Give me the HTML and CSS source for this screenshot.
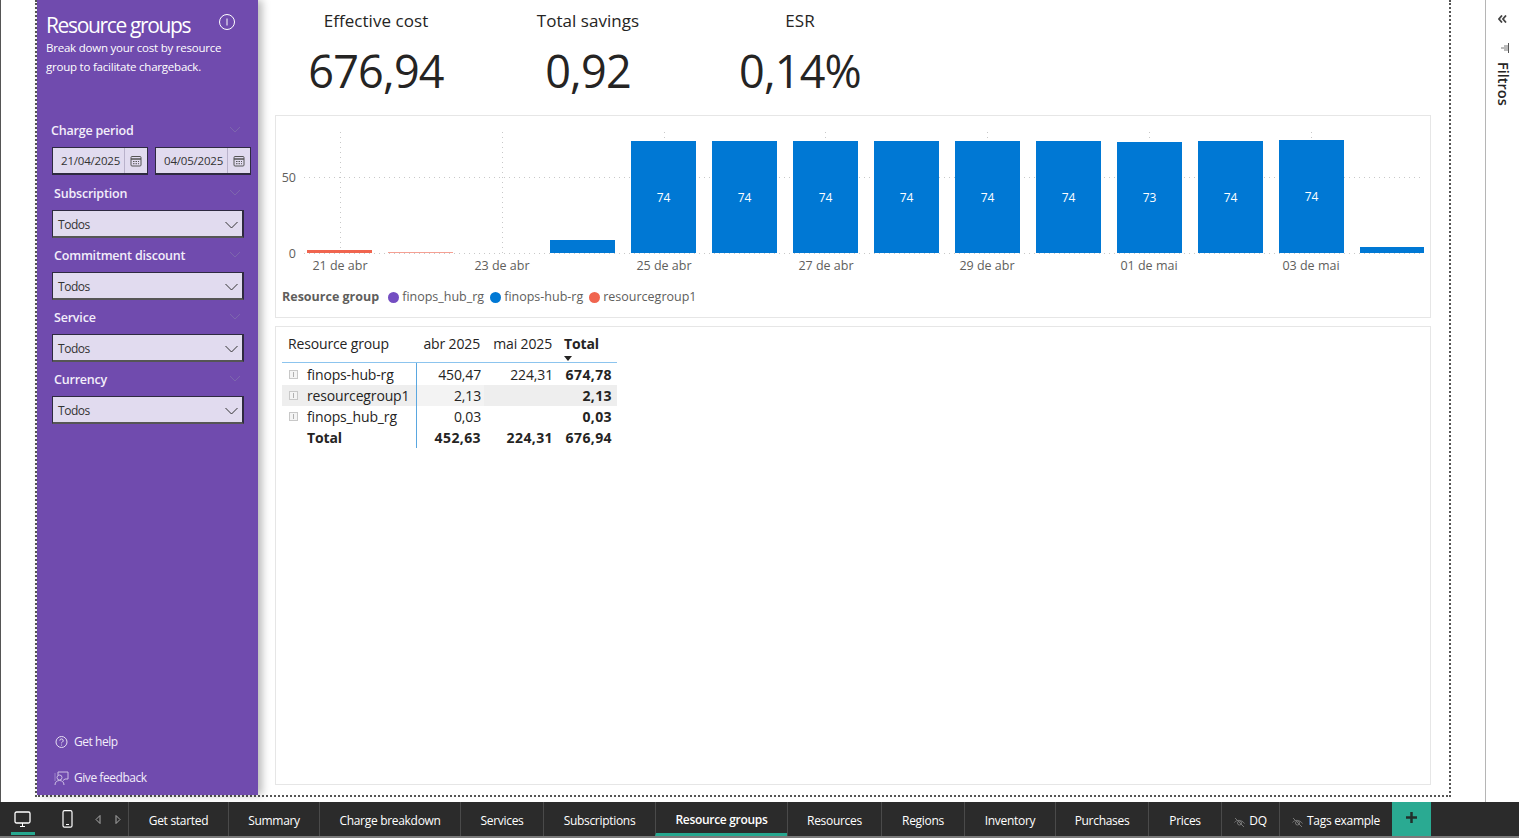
FILE: index.html
```html
<!DOCTYPE html>
<html lang="en">
<head>
  <meta charset="UTF-8" />
  <title>Resource groups</title>
  <link rel="stylesheet" href="styles.css">
</head>
<body>
  <div class="app">
    <div class="workspace">
      <div class="canvas">
        <aside class="sidebar">
          <div class="side-head">
            <h1>Resource groups</h1>
            <svg class="info" width="18" height="18" viewBox="0 0 18 18"><circle cx="9" cy="8" r="7.5" fill="none" stroke="#fff"/><path d="M9 4.5v7" stroke="#fff"/></svg>
          </div>
          <p class="side-desc">Break down your cost by resource group to facilitate chargeback.</p>

          <div class="slicer first">
            <div class="slicer-title date-title">Charge period<svg class="ghost" width="12" height="7" viewBox="0 0 12 7"><path d="M1 1l5 5 5-5"/></svg></div>
            <div class="dates">
              <div class="date"><span>21/04/2025</span><i class="cal"><svg width="12" height="12" viewBox="0 0 12 12"><rect x="1" y="1.5" width="10" height="9.5" rx="1" fill="none" stroke="#555"/><path d="M1 4h10" stroke="#555" stroke-width="1.5"/><path d="M3 6.5h6M3 8.7h6" stroke="#555" stroke-dasharray="1.5 1"/></svg></i></div>
              <div class="date"><span>04/05/2025</span><i class="cal"><svg width="12" height="12" viewBox="0 0 12 12"><rect x="1" y="1.5" width="10" height="9.5" rx="1" fill="none" stroke="#555"/><path d="M1 4h10" stroke="#555" stroke-width="1.5"/><path d="M3 6.5h6M3 8.7h6" stroke="#555" stroke-dasharray="1.5 1"/></svg></i></div>
            </div>
          </div>

          <div class="slicer">
            <div class="slicer-title">Subscription<svg class="ghost" width="12" height="7" viewBox="0 0 12 7"><path d="M1 1l5 5 5-5"/></svg></div>
            <div class="select"><span>Todos</span><svg width="13" height="8" viewBox="0 0 13 8"><path d="M.5 1l6 6 6-6" fill="none" stroke="#333"/></svg></div>
          </div>
          <div class="slicer">
            <div class="slicer-title">Commitment discount<svg class="ghost" width="12" height="7" viewBox="0 0 12 7"><path d="M1 1l5 5 5-5"/></svg></div>
            <div class="select"><span>Todos</span><svg width="13" height="8" viewBox="0 0 13 8"><path d="M.5 1l6 6 6-6" fill="none" stroke="#333"/></svg></div>
          </div>
          <div class="slicer">
            <div class="slicer-title">Service<svg class="ghost" width="12" height="7" viewBox="0 0 12 7"><path d="M1 1l5 5 5-5"/></svg></div>
            <div class="select"><span>Todos</span><svg width="13" height="8" viewBox="0 0 13 8"><path d="M.5 1l6 6 6-6" fill="none" stroke="#333"/></svg></div>
          </div>
          <div class="slicer">
            <div class="slicer-title">Currency<svg class="ghost" width="12" height="7" viewBox="0 0 12 7"><path d="M1 1l5 5 5-5"/></svg></div>
            <div class="select"><span>Todos</span><svg width="13" height="8" viewBox="0 0 13 8"><path d="M.5 1l6 6 6-6" fill="none" stroke="#333"/></svg></div>
          </div>

          <div class="side-links">
            <a class="side-link"><svg width="15" height="14" viewBox="-.5 0 15 14"><circle cx="7" cy="7" r="5.5" fill="none" stroke="#e6dff2"/><path d="M5.3 5.6a1.7 1.7 0 1 1 2.5 1.5c-.6.3-.8.6-.8 1.2" fill="none" stroke="#e6dff2"/><circle cx="7" cy="10" r=".6" fill="#e6dff2"/></svg>Get help</a>
            <a class="side-link"><svg width="15" height="15" viewBox="0 0 15 15"><path d="M4 4V1h10v7h-3l-2 1.5" fill="none" stroke="#cdbfe4"/><circle cx="5.5" cy="6.5" r="2.5" fill="none" stroke="#cdbfe4"/><path d="M1 14c0-3 2-4.5 4.5-4.5S10 11 10 14" fill="none" stroke="#cdbfe4"/><path d="M1 2v8" stroke="#9c83c9"/></svg>Give feedback</a>
          </div>
        </aside>

        <main class="report">
          <section class="kpis">
            <div class="kpi"><div class="kpi-label">Effective cost</div><div class="kpi-value">676,94</div></div>
            <div class="kpi"><div class="kpi-label">Total savings</div><div class="kpi-value">0,92</div></div>
            <div class="kpi"><div class="kpi-label">ESR</div><div class="kpi-value">0,14%</div></div>
          </section>

          <section class="card chart-card">
            <svg class="chart" width="1154" height="167" viewBox="276 116 1154 167">
              <g class="grid">
                <path d="M304 177.5H1424M304 253.5H1424"/>
                <path d="M340.5 132V253M502.5 132V253M664.5 132V253M825.5 132V253M987.5 132V253M1149.5 132V253M1311.5 132V253"/>
              </g>
              <text class="axis" x="296" y="182" text-anchor="end">50</text>
              <text class="axis" x="296" y="258" text-anchor="end">0</text>

              <rect x="307" y="250" width="65" height="3" fill="#f0654f"/>
              <rect x="388" y="252" width="65" height="1" fill="#f5a093"/>
              <g class="bars">
                <rect x="550" y="240" width="65" height="13"/>
                <rect x="631" y="141" width="65" height="112"/>
                <rect x="712" y="141" width="65" height="112"/>
                <rect x="793" y="141" width="65" height="112"/>
                <rect x="874" y="141" width="65" height="112"/>
                <rect x="955" y="141" width="65" height="112"/>
                <rect x="1036" y="141" width="65" height="112"/>
                <rect x="1117" y="142" width="65" height="111"/>
                <rect x="1198" y="141" width="65" height="112"/>
                <rect x="1279" y="140" width="65" height="113"/>
                <rect x="1360" y="247" width="64" height="6"/>
              </g>
              <g class="labels" text-anchor="middle">
                <text x="663.5" y="202">74</text>
                <text x="744.5" y="202">74</text>
                <text x="825.5" y="202">74</text>
                <text x="906.5" y="202">74</text>
                <text x="987.5" y="202">74</text>
                <text x="1068.5" y="202">74</text>
                <text x="1149.5" y="202">73</text>
                <text x="1230.5" y="202">74</text>
                <text x="1311.5" y="201">74</text>
              </g>
              <g class="axis" text-anchor="middle">
                <text x="340" y="270">21 de abr</text>
                <text x="502" y="270">23 de abr</text>
                <text x="664" y="270">25 de abr</text>
                <text x="826" y="270">27 de abr</text>
                <text x="987" y="270">29 de abr</text>
                <text x="1149" y="270">01 de mai</text>
                <text x="1311" y="270">03 de mai</text>
              </g>
            </svg>
            <div class="legend">
              <b>Resource group</b>
              <span class="key"><i class="dot purple"></i>finops_hub_rg</span>
              <span class="key"><i class="dot blue"></i>finops-hub-rg</span>
              <span class="key"><i class="dot coral"></i>resourcegroup1</span>
            </div>
          </section>

          <section class="card table-card">
            <table class="matrix">
              <thead>
                <tr>
                  <th class="name">Resource group</th>
                  <th class="num col-abr">abr 2025</th>
                  <th class="num col-mai">mai 2025</th>
                  <th class="tot">Total<i class="sort"></i></th>
                </tr>
              </thead>
              <tbody>
                <tr><td class="name"><i class="plus"></i>finops-hub-rg</td><td class="num">450,47</td><td class="num">224,31</td><td class="num strong">674,78</td></tr>
                <tr class="hover"><td class="name"><i class="plus"></i>resourcegroup1</td><td class="num">2,13</td><td class="num"></td><td class="num strong">2,13</td></tr>
                <tr><td class="name"><i class="plus"></i>finops_hub_rg</td><td class="num">0,03</td><td class="num"></td><td class="num strong">0,03</td></tr>
                <tr class="total"><td class="name"><i class="plus blank"></i>Total</td><td class="num strong">452,63</td><td class="num strong">224,31</td><td class="num strong">676,94</td></tr>
              </tbody>
            </table>
          </section>
        </main>
      </div>

      <aside class="filters">
        <svg class="collapse" width="9" height="8" viewBox="0 0 9 8"><path d="M4 .5L1 4l3 3.5M8 .5L5 4l3 3.5" fill="none" stroke="#444" stroke-width="1.8"/></svg>
        <svg class="funnel" width="9" height="10" viewBox="0 0 9 10"><path d="M0 5h7M3 3h4M3 7h4" stroke="#777"/><path d="M7.5 0v10" stroke="#555"/></svg>
        <span class="filters-label">Filtros</span>
      </aside>
    </div>

    <nav class="tabs">
      <div class="devices">
        <span class="device on"><svg width="17" height="17" viewBox="0 0 17 17"><rect x="1" y="1" width="15" height="11" rx="1.5" fill="none" stroke="#fff" stroke-width="1.3"/><path d="M6 15.5h5M8.5 12v3" stroke="#fff"/></svg></span>
        <span class="device"><svg width="11" height="18" viewBox="0 0 11 18"><rect x="1" y=".7" width="9" height="16.5" rx="1.5" fill="none" stroke="#fff" stroke-width="1.2"/><path d="M4 14.5h3" stroke="#fff"/></svg></span>
        <span class="pager"><svg width="6" height="9" viewBox="0 0 6 9"><path d="M5 .5L1 4.5 5 8.5z" fill="none" stroke="#aaa"/></svg><svg width="6" height="9" viewBox="0 0 6 9"><path d="M1 .5L5 4.5 1 8.5z" fill="none" stroke="#aaa"/></svg></span>
      </div>
      <a class="tab">Get started</a>
      <a class="tab">Summary</a>
      <a class="tab">Charge breakdown</a>
      <a class="tab">Services</a>
      <a class="tab">Subscriptions</a>
      <a class="tab active">Resource groups</a>
      <a class="tab">Resources</a>
      <a class="tab">Regions</a>
      <a class="tab">Inventory</a>
      <a class="tab">Purchases</a>
      <a class="tab">Prices</a>
      <a class="tab hidden-tab"><svg width="11" height="11" viewBox="0 0 11 11"><path d="M.5 5.5c2-3 7-3 10 1M1 1l9 9" fill="none" stroke="#777"/><circle cx="5.5" cy="6" r="2" fill="none" stroke="#777"/></svg>DQ</a>
      <a class="tab hidden-tab"><svg width="11" height="11" viewBox="0 0 11 11"><path d="M.5 5.5c2-3 7-3 10 1M1 1l9 9" fill="none" stroke="#777"/><circle cx="5.5" cy="6" r="2" fill="none" stroke="#777"/></svg>Tags example</a>
      <a class="tab-add"><svg width="11" height="11" viewBox="0 0 11 11"><path d="M5.5 0v11M0 5.5h11" stroke="#22302c" stroke-width="2.5"/></svg></a>
    </nav>
  </div>
</body>
</html>
```

FILE: styles.css
```css
html, body {
  margin: 0;
  padding: 0;
  height: 100%;
  background: #fff;
  overflow: hidden;
}
body {
  font-family: "Open Sans", "Noto Sans", "Liberation Sans", sans-serif;
  color: #252423;
}
.app {
  height: 838px;
  display: flex;
  flex-direction: column;
}
.workspace {
  height: 802px;
  display: flex;
  border-left: 1px solid #555;
  box-sizing: border-box;
  padding-left: 34px;
}

/* report canvas */
.canvas {
  width: 1416px;
  height: 797px;
  box-sizing: border-box;
  border: 2px dotted #555;
  border-top: none;
  display: flex;
}
.sidebar {
  width: 221px;
  flex: none;
  background: #704bae;
  color: #fff;
  box-shadow: 4px 0 8px rgba(0, 0, 0, 0.28);
  box-sizing: border-box;
  padding: 13px 14px 8px 9px;
  display: flex;
  flex-direction: column;
}
.side-head {
  display: flex;
  justify-content: space-between;
  align-items: flex-start;
  padding-right: 8px;
}
.side-head h1 {
  margin: 0;
  font-size: 21px;
  line-height: 24px;
  font-weight: 400;
  letter-spacing: -1.35px;
}
.info {
  margin-top: 1px;
}
.side-desc {
  margin: 1px 0 0;
  font-size: 11.5px;
  line-height: 19px;
  letter-spacing: -0.22px;
  width: 190px;
}
.slicer {
  margin: 0 0 0 6px;
  height: 62px;
}
.slicer.first {
  margin-top: 46px;
  height: 63px;
}
.slicer-title {
  font-size: 12.5px;
  font-weight: 600;
  line-height: 18px;
  letter-spacing: -0.2px;
  color: #f3eefa;
  padding-left: 2px;
  height: 25px;
  position: relative;
}
.date-title {
  padding-left: 0;
  margin-left: -1px;
}
.ghost {
  position: absolute;
  right: 3px;
  top: 4px;
  fill: none;
  stroke: #7d66ad;
}
.dates {
  display: flex;
  gap: 7px;
  width: 199px;
}
.date {
  flex: none;
  width: 96px;
  height: 28px;
  box-sizing: border-box;
  background: #e1dbef;
  border: 1px solid #2e2a40;
  border-bottom-width: 2px;
  display: flex;
  align-items: center;
  justify-content: space-between;
  font-size: 11.5px;
  letter-spacing: -0.2px;
  color: #333;
  padding-left: 8px;
}
.cal {
  width: 22px;
  height: 100%;
  border-left: 1px solid #b9b2cb;
  display: flex;
  align-items: center;
  justify-content: center;
}
.select {
  width: 192px;
  height: 28px;
  box-sizing: border-box;
  background: #e1dbef;
  border: 1px solid #2e2a40;
  border-bottom: 2px solid #555;
  border-right-width: 2px;
  display: flex;
  align-items: center;
  justify-content: space-between;
  padding: 2px 4px 0 5px;
  font-size: 12px;
  letter-spacing: -0.45px;
  color: #333;
}
.side-links {
  margin-top: auto;
  display: flex;
  flex-direction: column;
  gap: 18px;
  padding-left: 8px;
}
.side-link {
  display: flex;
  align-items: center;
  gap: 5px;
  font-size: 12px;
  line-height: 18px;
  letter-spacing: -0.45px;
  color: #f3eefa;
}

/* main report area */
.report {
  flex: 1;
  padding: 0 20px 0 17px;
  display: flex;
  flex-direction: column;
}
.kpis {
  height: 115px;
  display: flex;
  margin-left: -5px;
}
.kpi {
  width: 212px;
  text-align: center;
}
.kpi-label {
  font-size: 17px;
  line-height: 22px;
  margin-top: 10px;
  letter-spacing: 0.05px;
}
.kpi-value {
  font-size: 45px;
  line-height: 60px;
  margin-top: 9px;
  letter-spacing: -0.8px;
}
.card {
  border: 1px solid #e6e6e6;
  box-sizing: border-box;
}
.chart-card {
  height: 203px;
}
.chart {
  display: block;
}
.grid path {
  fill: none;
  stroke: #c8c8c8;
  stroke-dasharray: 1 4;
}
.bars rect {
  fill: #0078d4;
}
.axis, .axis text {
  font-size: 12.5px;
  fill: #605e5c;
}
.labels text {
  font-size: 12px;
  fill: #fff;
}
.legend {
  display: flex;
  align-items: center;
  gap: 6px;
  padding: 5px 0 0 6px;
  font-size: 12.5px;
  line-height: 18px;
  color: #605e5c;
}
.legend b {
  font-weight: 700;
  margin-right: 3px;
}
.key {
  display: flex;
  align-items: center;
  gap: 3px;
}
.dot {
  width: 11px;
  height: 11px;
  border-radius: 50%;
}
.purple { background: #744ec2; }
.blue { background: #0078d4; }
.coral { background: #f0654f; }

.table-card {
  margin-top: 8px;
  height: 459px;
  padding: 6px;
}

/* matrix visual */
.matrix {
  border-collapse: collapse;
  table-layout: fixed;
  width: 335px;
  font-size: 14px;
  letter-spacing: -0.15px;
}
.matrix th, .matrix td {
  box-sizing: border-box;
  padding: 0;
}
.matrix th {
  font-weight: 400;
  height: 29px;
  vertical-align: top;
  line-height: 21px;
  border-bottom: 1px solid #8cc4ee;
}
.matrix td {
  height: 21px;
  line-height: 20px;
  padding-top: 1px;
}
.matrix .name {
  width: 134px;
  text-align: left;
  white-space: nowrap;
}
.matrix td.name {
  border-right: 1px solid #5aa7e0;
}
.matrix th.name {
  padding-left: 6px;
}
.matrix .num {
  text-align: right;
}
.col-abr {
  width: 68px;
}
.col-mai {
  width: 72px;
}
.matrix th.num {
  padding-right: 4px;
}
.matrix td.num {
  padding-right: 3px;
}
.matrix td.num:last-child {
  padding-right: 5px;
}
.matrix th.tot {
  text-align: left;
  padding-left: 8px;
  font-weight: 700;
  position: relative;
}
.sort {
  position: absolute;
  left: 8px;
  bottom: 1px;
  border: 4px solid transparent;
  border-top: 5px solid #252423;
  border-bottom: none;
}
.matrix tbody tr:first-child td {
  height: 22px;
  padding-top: 2px;
}
.matrix .strong, .total td {
  font-weight: 700;
}
.matrix .strong {
  letter-spacing: 0.4px;
}
.hover td {
  background: #eee;
}
.hover td:nth-child(2) {
  background: #f3f3f3;
}
.plus {
  display: inline-block;
  width: 9px;
  height: 9px;
  box-sizing: border-box;
  border: 1px solid #c8c8c8;
  background: #f4f4f4;
  margin: 0 9px 0 7px;
  position: relative;
  top: -1px;
}
.plus::after {
  content: "";
  position: absolute;
  left: 3px;
  top: 1px;
  width: 1px;
  height: 5px;
  background: #b0b0b0;
}
.plus.blank {
  border-color: transparent;
  background: none;
}
.plus.blank::after {
  display: none;
}

/* filters pane */
.filters {
  margin-left: 34px;
  width: 34px;
  flex: none;
  border-left: 1px solid #b5b5b5;
  display: flex;
  flex-direction: column;
  align-items: center;
  padding-top: 15px;
}
.collapse {
  margin-right: 1px;
}
.funnel {
  margin-top: 20px;
  margin-left: 5px;
}
.filters-label {
  writing-mode: vertical-rl;
  font-size: 14.5px;
  font-weight: 600;
  margin-top: 9px;
  color: #252423;
}

/* page tabs */
.tabs {
  height: 36px;
  background: #2b2b2b;
  border-bottom: 2px solid #7a7a7a;
  box-sizing: border-box;
  display: grid;
  grid-template-columns: 128px 100px 91px 141px 83px 112px 132px 94px 83px 91px 93px 73px 58px 113px 39px;
  color: #fff;
}
.devices {
  display: flex;
  align-items: center;
  position: relative;
  padding-left: 14px;
}
.device {
  display: flex;
  align-items: center;
  height: 100%;
  margin-right: 31px;
}
.device.on::after {
  content: "";
  position: absolute;
  left: 11px;
  bottom: 1px;
  width: 24px;
  height: 3px;
  background: #26a78f;
}
.pager {
  display: flex;
  gap: 14px;
  margin-left: -9px;
}
.tab {
  display: flex;
  align-items: center;
  justify-content: center;
  gap: 4px;
  border-left: 1px solid #4a4a4a;
  font-size: 12px;
  letter-spacing: -0.3px;
  padding-top: 3px;
  white-space: nowrap;
}
.tab.active {
  font-weight: 600;
  border-bottom: 3px solid #26a78f;
}
.hidden-tab svg {
  margin-top: 4px;
}
.tab-add {
  background: #2aaa92;
  display: flex;
  align-items: center;
  justify-content: center;
  padding-bottom: 3px;
}
```
